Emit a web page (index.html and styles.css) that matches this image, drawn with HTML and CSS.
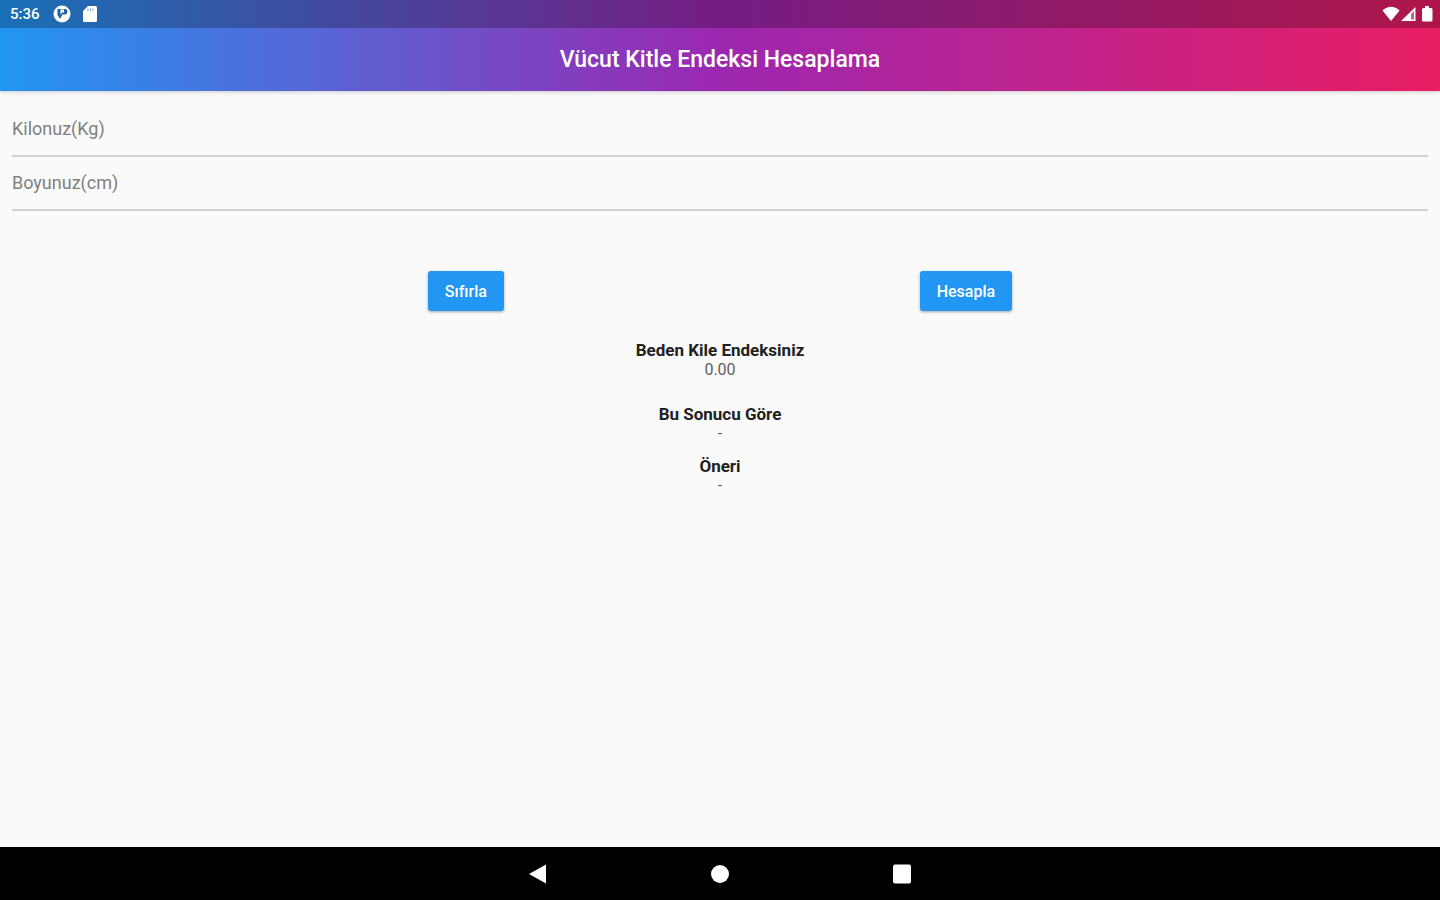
FILE: index.html
```html
<!DOCTYPE html>
<html lang="tr">

<head>
  <meta charset="UTF-8" />
  <meta name="viewport" content="width=device-width, initial-scale=1.0" />
  <title>Vücut Kitle Endeksi Hesaplama</title>
  <link rel="stylesheet" href="styles.css">
</head>

<body>
  <header class="appHeader">
    <div class="statusBar">
      <div class="statusLeft">
        <span class="clock">5:36</span>
        <svg class="statusIcon" viewBox="0 0 18 18">
          <circle cx="9" cy="9" r="8.5" fill="#fff" />
          <path d="M4.500 4h8q2 0 2 2.500T12 9.500H9.500L7 14 4.500 10z" fill="#1f62a8" />
          <path d="M7.500 4.500h3.500v3H9L7.500 10z" fill="#fff" />
        </svg>
        <svg class="statusIcon" viewBox="0 0 18 18">
          <path d="M7 1h7.500q1.500 0 1.500 1.500v13q0 1.500-1.500 1.500h-11Q2 17 2 15.500V6z" fill="#fff" />
          <path d="M7 3.500v2.500M9.500 3.500v2.500M12 3.500v2.500" stroke="#7da6d3" />
        </svg>
      </div>
      <div class="statusRight">
        <svg class="statusIcon" viewBox="0 0 18 18">
          <path d="M0.500 5.500Q9-2 17.500 5.500L9 16z" fill="#fff" />
        </svg>
        <svg class="statusIcon" viewBox="0 0 18 18">
          <path d="M15.500 2v14H1z" fill="#fff" />
          <path d="M11 9l3-3v8.500h-3z" fill="#c85f93" />
        </svg>
        <svg class="statusIcon" viewBox="0 0 18 18">
          <path d="M7 1h4v2h2q1.500 0 1.500 1.500v10.500q0 1.500-1.500 1.500H5.500Q4 16.500 4 15V4.500Q4 3 5.500 3H7z" fill="#fff" />
        </svg>
      </div>
    </div>
    <h1 class="title">Vücut Kitle Endeksi Hesaplama</h1>
  </header>

  <main class="content">
    <form id="formulario">
      <input class="inputText" type="text" inputmode="decimal" id="kilo" name="kilo" placeholder="Kilonuz(Kg)" aria-label="Kilonuz(Kg)" />
      <input class="inputText" type="text" inputmode="decimal" id="boy" name="boy" placeholder="Boyunuz(cm)" aria-label="Boyunuz(cm)" />

      <div class="buttons">
        <button class="btn" type="reset">Sıfırla</button>
        <button class="btn" type="submit">Hesapla</button>
      </div>
    </form>

    <section class="results">
      <div class="result resultIndex">
        <h2>Beden Kile Endeksiniz</h2>
        <p id="endeks">0.00</p>
      </div>
      <div class="result">
        <h2>Bu Sonucu Göre</h2>
        <p id="sonuc">-</p>
      </div>
      <div class="result">
        <h2>Öneri</h2>
        <p id="oneri">-</p>
      </div>
    </section>
  </main>

  <nav class="navBar">
    <button class="navButton" type="button" aria-label="Geri">
      <svg viewBox="0 0 20 20"><path d="M1 10L18 0.500v19z" fill="#fff" /></svg>
    </button>
    <button class="navButton" type="button" aria-label="Ana ekran">
      <svg viewBox="0 0 20 20"><circle cx="10" cy="10" r="9" fill="#fff" /></svg>
    </button>
    <button class="navButton" type="button" aria-label="Son uygulamalar">
      <svg viewBox="0 0 20 20"><rect x="1" y="0.500" width="18" height="19" rx="2" fill="#fff" /></svg>
    </button>
  </nav>

  <script src="script.js"></script>
</body>

</html>
```

FILE: styles.css
```css
* {
  box-sizing: border-box;
}

body {
  margin: 0;
  min-height: 100vh;
  display: flex;
  flex-direction: column;
  background: #fafafa;
  color: #212121;
  font-family: Roboto, sans-serif;
}

h1, h2, p {
  margin: 0;
}

svg {
  display: block;
}

.appHeader {
  background: linear-gradient(to right, #2196f3, #9c27b0, #e91e63);
  box-shadow: 0 1px 4px rgba(0, 0, 0, 0.2);
  color: #fff;
}

.statusBar {
  display: flex;
  align-items: center;
  justify-content: space-between;
  height: 28px;
  padding: 0 4px 0 10px;
  background: rgba(0, 0, 0, 0.25);
}

.statusLeft,
.statusRight {
  display: flex;
  align-items: center;
}

.statusLeft {
  gap: 10px;
}

.clock {
  margin-right: 3px;
  font-size: 15px;
  line-height: 20px;
  font-weight: 500;
}

.statusIcon {
  width: 18px;
  height: 18px;
}

.title {
  padding: 16px 12px;
  font-size: 23px;
  line-height: 31px;
  font-weight: 500;
  text-align: center;
}

.content {
  flex: 1;
  padding: 12px;
}

#formulario {
  display: flex;
  flex-direction: column;
}

.inputText {
  width: 100%;
  height: 54px;
  padding: 0 0 2px;
  border: 0;
  border-bottom: 2px solid #d0d0d0;
  background: none;
  color: #212121;
  font-family: inherit;
  font-size: 18px;
  outline: none;
}

.inputText:focus {
  border-bottom-color: #2196f3;
}

.inputText::placeholder {
  color: #808080;
  opacity: 1;
}

.buttons {
  display: flex;
  justify-content: space-evenly;
  padding: 60px 0 29px;
}

.btn {
  height: 40px;
  padding: 0 17px;
  border: 0;
  border-radius: 3px;
  background: #2196f3;
  box-shadow: 0 1px 3px rgba(0, 0, 0, 0.35);
  color: #fff;
  font-family: inherit;
  font-size: 16px;
  font-weight: 500;
  cursor: pointer;
}

.results {
  display: flex;
  flex-direction: column;
  gap: 12px;
  text-align: center;
}

.resultIndex {
  padding-bottom: 12px;
}

.result h2,
.result p {
  line-height: 20px;
}

.result h2 {
  font-size: 17px;
  font-weight: 700;
}

.result p {
  font-size: 16px;
  color: #616161;
}

.navBar {
  display: flex;
  justify-content: center;
  align-items: center;
  gap: 134px;
  height: 53px;
  background: #000;
}

.navButton {
  width: 48px;
  height: 48px;
  padding: 14px;
  border: 0;
  background: none;
  cursor: pointer;
}
```

FILE: script.js
```js
var form = document.getElementById("formulario");

function yaz(endeks, sonuc, oneri) {
  document.getElementById("endeks").textContent = endeks;
  document.getElementById("sonuc").textContent = sonuc;
  document.getElementById("oneri").textContent = oneri;
}

form.addEventListener("submit", function (e) {
  e.preventDefault();
  var kilo = parseFloat(form.kilo.value);
  var boy = parseFloat(form.boy.value) / 100;
  if (!(kilo > 0 && boy > 0)) {
    return;
  }

  var endeks = kilo / (boy * boy);
  if (endeks < 18.5) {
    yaz(endeks.toFixed(2), "Zayıf", "Kilo almalısınız");
  } else if (endeks < 25) {
    yaz(endeks.toFixed(2), "Normal", "Kilonuzu koruyun");
  } else {
    yaz(endeks.toFixed(2), "Fazla kilolu", "Kilo vermelisiniz");
  }
});

form.addEventListener("reset", function () {
  yaz("0.00", "-", "-");
});
```
